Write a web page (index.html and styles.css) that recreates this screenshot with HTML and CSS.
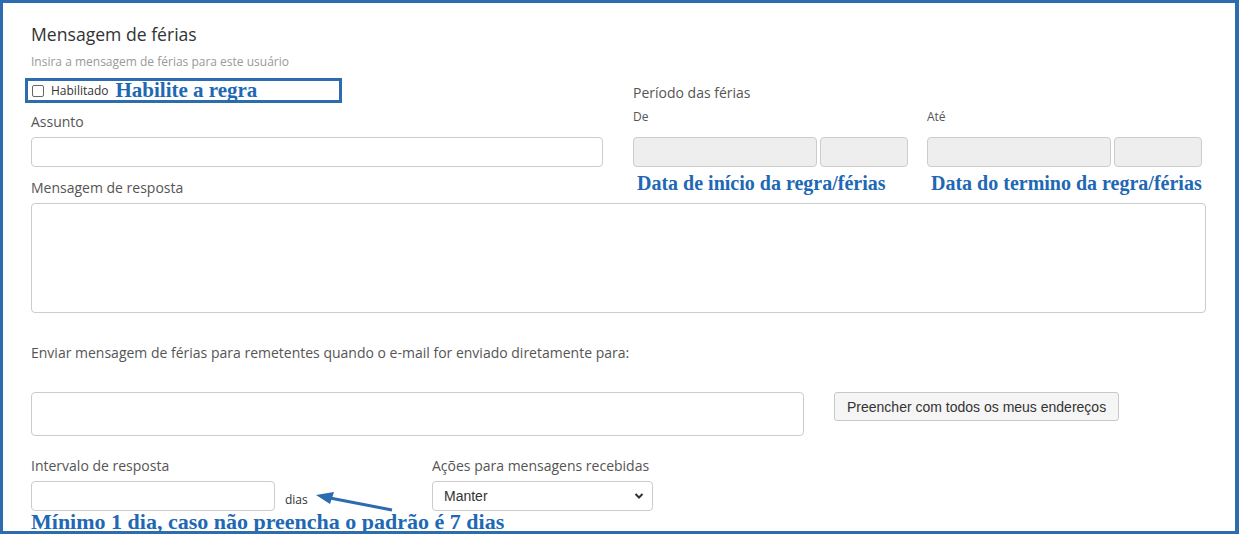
FILE: index.html
```html
<!DOCTYPE html>
<html lang="pt">
<head>
<meta charset="utf-8">
<title>Mensagem de férias</title>
<link rel="stylesheet" href="styles.css">
</head>
<body>
<div class="frame">
  <h1 class="title">Mensagem de férias</h1>
  <p class="subtitle">Insira a mensagem de férias para este usuário</p>

  <div class="top-row">
    <div class="left-col">
      <div class="habil-box">
        <span class="checkbox"></span>
        <span class="habil-label">Habilitado</span>
        <span class="note note-habil">Habilite a regra</span>
      </div>
      <label class="label label-assunto">Assunto</label>
      <div class="input input-assunto"></div>
      <label class="label label-msg">Mensagem de resposta</label>
    </div>
    <div class="right-col">
      <div class="label periodo">Período das férias</div>
      <div class="date-groups">
        <div class="date-group">
          <div class="small-label">De</div>
          <div class="date-inputs">
            <div class="input date-main"></div>
            <div class="input date-time"></div>
          </div>
          <div class="note note-date">Data de início da regra/férias</div>
        </div>
        <div class="date-group">
          <div class="small-label">Até</div>
          <div class="date-inputs">
            <div class="input date-main"></div>
            <div class="input date-time"></div>
          </div>
          <div class="note note-date">Data do termino da regra/férias</div>
        </div>
      </div>
    </div>
  </div>

  <div class="input textarea"></div>

  <p class="label label-enviar">Enviar mensagem de férias para remetentes quando o e-mail for enviado diretamente para:</p>

  <div class="addr-row">
    <div class="input addr-input"></div>
    <button class="btn" type="button">Preencher com todos os meus endereços</button>
  </div>

  <div class="bottom-row">
    <div class="interval">
      <div class="label">Intervalo de resposta</div>
      <div class="interval-line">
        <div class="input interval-input"></div>
        <span class="dias">dias</span>
      </div>
    </div>
    <div class="actions">
      <div class="label">Ações para mensagens recebidas</div>
      <div class="select">
        <span>Manter</span>
        <svg class="chev" width="10" height="8" viewBox="0 0 10 8"><path d="M1.5 2 L5 5.5 L8.5 2" fill="none" stroke="#333" stroke-width="2"/></svg>
      </div>
    </div>
  </div>
  <div class="note note-min">Mínimo 1 dia, caso não preencha o padrão é 7 dias</div>

  <svg class="arrow" width="100" height="30" viewBox="0 0 100 30">
    <path d="M82 22 L20 10" stroke="#2b6cb0" stroke-width="3" fill="none"/>
    <path d="M6 7 L24 4 L20 16 Z" fill="#2b6cb0"/>
  </svg>
</div>
</body>
</html>
```

FILE: styles.css
```css
* { box-sizing: border-box; }
html, body { margin: 0; padding: 0; background: #fff; }
body { width: 1240px; height: 534px; overflow: hidden; font-family: "Open Sans", "Liberation Sans", sans-serif; }

.frame {
  position: relative;
  width: 1239px;
  height: 534px;
  border-style: solid;
  border-color: #2e6cb0;
  border-width: 3px 4px 3px 3px;
  padding-left: 28px;
  overflow: hidden;
}

.title {
  margin: 21px 0 0;
  font-size: 17.6px;
  line-height: 20px;
  font-weight: 400;
  color: #333;
}
.subtitle {
  margin: 10px 0 0;
  font-size: 12px;
  line-height: 15px;
  color: #999;
}

.top-row { display: flex; gap: 30px; margin-top: 9px; }
.left-col { width: 572px; display: flex; flex-direction: column; }
.right-col { padding-top: 6px; }

.habil-box {
  margin-left: -6px;
  width: 317px;
  height: 25px;
  border: 3px solid #2e6cb0;
  display: flex;
  align-items: center;
  padding-left: 4px;
}
.checkbox {
  width: 12px; height: 12px;
  border: 1px solid #666;
  border-radius: 2px;
  background: #fff;
}
.habil-label { margin-left: 7px; font-size: 12px; line-height: 15px; color: #333; }

.note {
  font-family: "Liberation Serif", "Times New Roman", serif;
  font-weight: 700;
  color: #2168b4;
  font-size: 20px;
  line-height: 22px;
}
.note-habil { margin-left: 7px; font-size: 21px; line-height: 19px; }

.label { font-size: 14px; line-height: 18px; color: #555; }
.label-assunto { margin-top: 10px; }
.input {
  border: 1px solid #ccc;
  border-radius: 4px;
  background: #fff;
}
.input-assunto { margin-top: 6px; height: 30px; }
.label-msg { margin-top: 12px; }

.small-label { font-size: 12px; line-height: 15px; color: #555; margin-top: 7px; }
.date-groups { display: flex; gap: 19px; }
.date-inputs { display: flex; gap: 3px; margin-top: 13px; }
.date-main { width: 184px; height: 30px; background: #eee; }
.date-time { width: 88px; height: 30px; background: #eee; }
.note-date { margin-top: 5px; margin-left: 4px; white-space: nowrap; }

.textarea { margin-top: 6px; width: 1175px; height: 110px; }

.label-enviar { margin: 31px 0 0; }
.addr-row { display: flex; align-items: flex-start; gap: 30px; margin-top: 30px; }
.addr-input { width: 773px; height: 44px; }
.btn {
  height: 29px;
  padding: 0 12px;
  font-family: "Liberation Sans", Arial, sans-serif;
  font-size: 14px;
  color: #333;
  background: #f5f5f5;
  border: 1px solid #c8c8c8;
  border-radius: 3px;
}

.bottom-row { display: flex; gap: 0; margin-top: 21px; }
.interval { width: 401px; }
.interval-line { display: flex; align-items: flex-end; margin-top: 6px; }
.interval-input { width: 244px; height: 30px; }
.dias { margin-left: 10px; font-size: 12px; line-height: 15px; color: #333; padding-bottom: 4px; }
.actions { width: 221px; }
.select {
  margin-top: 6px;
  height: 30px;
  border: 1px solid #ccc;
  border-radius: 4px;
  display: flex;
  align-items: center;
  justify-content: space-between;
  padding: 0 8px 0 11px;
  font-family: "Liberation Sans", Arial, sans-serif;
  font-size: 14px;
  color: #333;
}
.note-min { margin-top: 0; font-size: 22px; line-height: 22px; }

.arrow { position: absolute; left: 307px; top: 485px; }
```
